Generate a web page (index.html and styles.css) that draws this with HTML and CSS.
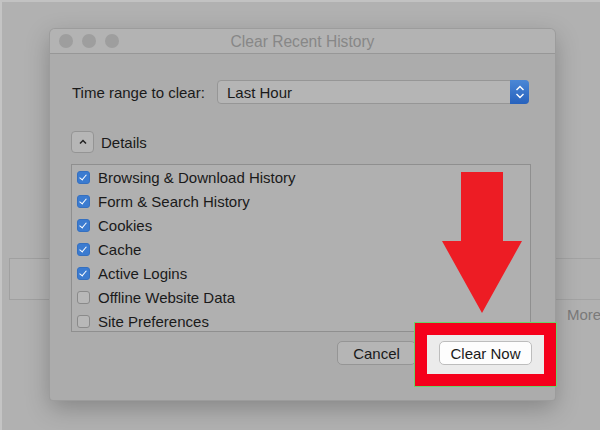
FILE: index.html
```html
<!DOCTYPE html>
<html>
<head>
<meta charset="utf-8">
<link rel="stylesheet" href="styles.css">
</head>
<body>
<div class="desktop">
  <div class="backdrop">
    <div class="bg-row">
      <div class="bg-box"></div>
      <div class="bg-right"></div>
    </div>
    <div class="bg-more">More</div>
  </div>

  <div class="dialog">
    <div class="titlebar">
      <div class="lights"><span></span><span></span><span></span></div>
      <div class="title">Clear Recent History</div>
    </div>
    <div class="content">
      <div class="range-row">
        <span class="label">Time range to clear:</span>
        <div class="select">
          <span class="select-text">Last Hour</span>
          <span class="stepper">
            <svg width="12" height="16" viewBox="0 0 12 16"><path d="M2.5 6 L6 2.5 L9.5 6" fill="none" stroke="#fff" stroke-width="1.4"/><path d="M2.5 10 L6 13.5 L9.5 10" fill="none" stroke="#fff" stroke-width="1.4"/></svg>
          </span>
        </div>
      </div>
      <div class="details-row">
        <span class="disclose"><svg width="10" height="8" viewBox="0 0 10 8"><path d="M2 5.5 L5 2.5 L8 5.5" fill="none" stroke="#222" stroke-width="1.5"/></svg></span>
        <span class="label">Details</span>
      </div>
      <div class="list">
        <div class="item"><span class="cb on"></span>Browsing &amp; Download History</div>
        <div class="item"><span class="cb on"></span>Form &amp; Search History</div>
        <div class="item"><span class="cb on"></span>Cookies</div>
        <div class="item"><span class="cb on"></span>Cache</div>
        <div class="item"><span class="cb on"></span>Active Logins</div>
        <div class="item"><span class="cb"></span>Offline Website Data</div>
        <div class="item"><span class="cb"></span>Site Preferences</div>
      </div>
      <div class="buttons">
        <button class="btn cancel">Cancel</button>
        <button class="btn primary">Clear Now</button>
      </div>
    </div>
  </div>

  <div class="highlight"></div>
  <svg class="arrow" width="82" height="142" viewBox="0 0 82 142"><path d="M19 0 H61 V69 H80 L40 141 L0 69 H19 Z" fill="#ed1c24"/></svg>
</div>
</body>
</html>
```

FILE: styles.css
```css
html, body {
  margin: 0;
  padding: 0;
}
body {
  width: 600px;
  height: 430px;
  overflow: hidden;
  font-family: "Liberation Sans", Arial, sans-serif;
  background: #b1b1b1;
}
.desktop {
  position: relative;
  width: 600px;
  height: 430px;
  background: #b1b1b1;
  border-left: 2px solid #c4c4c4;
  border-top: 2px solid #c2c2c2;
  box-sizing: border-box;
}
.backdrop {
  padding-top: 256px;
}
.bg-row {
  display: flex;
  height: 42px;
}
.bg-box {
  margin-left: 7px;
  width: 60px;
  border: 1px solid #a0a0a0;
  border-right: none;
  background: #b3b3b3;
}
.bg-right {
  flex: 1;
  border-top: 1px solid #a3a3a3;
  border-bottom: 1px solid #a3a3a3;
}
.bg-more {
  padding-left: 565px;
  margin-top: 6px;
  font-size: 15px;
  color: #7a7a7a;
  white-space: nowrap;
}
.dialog {
  position: absolute;
  left: 48px;
  top: 27px;
  width: 505px;
  height: 371px;
  background: #acacac;
  border-radius: 5px 5px 3px 3px;
  box-shadow: 0 0 0 1px #9c9c9c, 0 8px 24px rgba(0,0,0,0.25);
  overflow: hidden;
}
.titlebar {
  position: relative;
  height: 24px;
  background: #b3b3b3;
  border-bottom: 1px solid #979797;
  display: flex;
  align-items: center;
}
.lights {
  display: flex;
  gap: 9px;
  padding-left: 9px;
}
.lights span {
  width: 14px;
  height: 14px;
  border-radius: 50%;
  background: #9e9e9e;
}
.title {
  position: absolute;
  left: 0;
  right: 0;
  text-align: center;
  font-size: 15.6px;
  color: #878787;
  top: 4px;
}
.content {
  padding: 26px 24px 0 21px;
}
.range-row {
  display: flex;
  align-items: center;
  height: 24px;
}
.label {
  font-size: 15px;
  color: #1a1a1a;
}
.range-row .label {
  margin-left: 1px;
  width: 145px;
}
.select {
  flex: 1;
  height: 22px;
  display: flex;
  align-items: center;
  background: #b5b5b5;
  border: 1px solid #969696;
  border-radius: 4px;
  margin-right: 2px;
}
.select-text {
  flex: 1;
  font-size: 15px;
  color: #1a1a1a;
  padding-left: 9px;
}
.stepper {
  width: 19px;
  height: 24px;
  margin: -1px -1px -1px 0;
  border-radius: 0 4px 4px 0;
  background: linear-gradient(#4a87d6, #2762bd);
  display: flex;
  align-items: center;
  justify-content: center;
}
.details-row {
  display: flex;
  align-items: center;
  margin-top: 27px;
  height: 22px;
}
.disclose {
  width: 21px;
  height: 20px;
  border: 1px solid #949494;
  border-radius: 4px;
  background: #b6b6b6;
  display: flex;
  align-items: center;
  justify-content: center;
  margin-right: 7px;
}
.list {
  margin-top: 11px;
  width: 458px;
  height: 166px;
  border: 1px solid #8f8f8f;
  background: #b0b0b0;
}
.item {
  height: 24px;
  display: flex;
  align-items: center;
  font-size: 15px;
  color: #1a1a1a;
  padding-left: 5px;
}
.cb {
  width: 11px;
  height: 11px;
  border: 1px solid #8a8a8a;
  border-radius: 3px;
  background: #b8b8b8;
  margin-right: 8px;
  position: relative;
}
.cb.on {
  background: #3b7bd0;
  border-color: #3570c0;
}
.cb.on::after {
  content: "";
  position: absolute;
  left: 3px;
  top: 1px;
  width: 3px;
  height: 6px;
  border: solid #fff;
  border-width: 0 1.5px 1.5px 0;
  transform: rotate(40deg);
}
.buttons {
  display: flex;
  justify-content: flex-end;
  gap: 23px;
  margin-top: 9px;
  margin-right: -1px;
}
.btn {
  font-family: "Liberation Sans", Arial, sans-serif;
  font-size: 15px;
  color: #1a1a1a;
  height: 24px;
  border-radius: 5px;
  border: 1px solid #959595;
  padding: 0;
}
.cancel {
  width: 79px;
  background: #b5b5b5;
}
.primary {
  position: relative;
  z-index: 2;
  width: 93px;
  background: #fdfdfd;
  border-color: #bdbdbd;
}
.highlight {
  position: absolute;
  z-index: 1;
  left: 413px;
  top: 321px;
  width: 117px;
  height: 39px;
  border: 12px solid #f5001b;
  outline: 1px solid #6bd36b;
  background: #ebebeb;
  pointer-events: none;
}
.arrow {
  position: absolute;
  z-index: 1;
  left: 440px;
  top: 170px;
}
```
